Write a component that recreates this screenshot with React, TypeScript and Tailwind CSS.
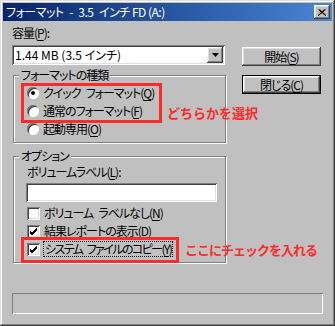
import React from 'react';

const raised =
  'shadow-[inset_-1px_-1px_#404040,inset_1px_1px_#ffffff,inset_-2px_-2px_#808080,inset_2px_2px_#dfdfdf]';
const sunken =
  'shadow-[inset_1px_1px_#808080,inset_-1px_-1px_#ffffff,inset_2px_2px_#404040,inset_-2px_-2px_#dfdfdf]';

// label with an underlined access key, e.g. 容量(P):
const Mn = ({ pre, k, post = '' }: { pre: string; k: string; post?: string }) => (
  <span>
    {pre}(<span className="underline underline-offset-2">{k}</span>){post}
  </span>
);

const Radio = ({ checked }: { checked?: boolean }) => (
  <span className="relative w-[12px] h-[12px] rounded-full bg-white shadow-[inset_1px_1px_#808080,inset_-1px_-1px_#ffffff,inset_2px_2px_#404040] flex items-center justify-center shrink-0">
    {checked && <span className="w-[4px] h-[4px] rounded-full bg-black" />}
  </span>
);

const Check = ({ checked }: { checked?: boolean }) => (
  <span className={`w-[13px] h-[13px] bg-white ${sunken} flex items-center justify-center shrink-0`}>
    {checked && (
      <svg width="9" height="9" viewBox="0 0 9 9">
        <path d="M1 4 L3 6 L8 1 M1 5 L3 7 L8 2 M1 6 L3 8 L8 3" stroke="#000" strokeWidth="1" fill="none" />
      </svg>
    )}
  </span>
);

const Group = ({ title, className, children }: { title: string; className: string; children: React.ReactNode }) => (
  <div className={`relative border border-[#808080] shadow-[1px_1px_0_#ffffff,inset_1px_1px_0_#ffffff] ${className}`}>
    <span className="absolute left-[5px] -top-[8px] px-[2px] bg-[#c0c0c0] leading-[14px]">{title}</span>
    {children}
  </div>
);

export default function App() {
  return (
    <div className="relative w-[335px] h-[326px] bg-[#c0c0c0] p-[3px] text-[12px] tracking-[-1px] text-black font-['Noto_Sans_CJK_JP',sans-serif] [font-feature-settings:'palt'] shadow-[inset_-1px_-1px_#404040,inset_1px_1px_#dfdfdf,inset_-2px_-2px_#808080,inset_2px_2px_#ffffff] overflow-hidden">
      {/* title bar */}
      <div className="h-[18px] flex items-center justify-between bg-gradient-to-r from-[#0a246a] to-[#4a86d4] pl-[3px] pr-[2px]">
        <span className="text-white leading-[18px] tracking-[-0.5px]">フォーマット{'\u2002'}-{'\u2002'}3.5{'\u2002'}インチ FD (A:)</span>
        <span className={`w-[16px] h-[14px] bg-[#c0c0c0] ${raised} flex items-center justify-center`}>
          <svg width="8" height="7" viewBox="0 0 8 7">
            <path d="M0.5 0.5 L7.5 6.5 M7.5 0.5 L0.5 6.5 M1.5 0.5 L8 6.5 M6.5 0.5 L0 6.5" stroke="#000" strokeWidth="1" />
          </svg>
        </span>
      </div>

      <div className="flex pl-[9px] pt-[5px]">
        {/* left column */}
        <div className="w-[214px] flex flex-col">
          <div className="h-[14px] leading-[14px]">
            <Mn pre="容量" k="P" post=":" />
          </div>
          <div className={`mt-[5px] w-[213px] h-[20px] bg-white ${sunken} flex items-center pl-[3px] pr-[2px]`}>
            <span className="flex-1 leading-[14px] tracking-normal">1.44 MB (3.5 インチ)</span>
            <span className={`w-[16px] h-[16px] bg-[#c0c0c0] ${raised} flex items-center justify-center`}>
              <svg width="7" height="4" viewBox="0 0 7 4">
                <path d="M0 0 H7 L3.5 4 Z" fill="#000" />
              </svg>
            </span>
          </div>

          <Group title="フォーマットの種類" className="mt-[10px] ml-[1px] w-[213px] h-[68px] pt-[8px] pl-[13px]">
            <div className="h-[18px] flex items-center gap-[4px]">
              <Radio checked />
              <span className="leading-[14px]">
                <Mn pre={'クイック\u2002フォーマット'} k="Q" />
              </span>
            </div>
            <div className="h-[18px] flex items-center gap-[4px]">
              <Radio />
              <span className="leading-[14px]">
                <Mn pre="通常のフォーマット" k="F" />
              </span>
            </div>
            <div className="h-[18px] flex items-center gap-[4px]">
              <Radio />
              <span className="leading-[14px]">
                <Mn pre="起動専用" k="O" />
              </span>
            </div>
          </Group>

          <Group title="オプション" className="mt-[13px] ml-[1px] w-[213px] h-[107px] pt-[8px] pl-[13px]">
            <div className="h-[14px] leading-[14px]">
              <Mn pre="ボリュームラベル" k="L" post=":" />
            </div>
            <div className={`mt-[4px] -ml-[1px] w-[191px] h-[19px] bg-white ${sunken}`} />
            <div className="mt-[2px] h-[18px] flex items-center gap-[4px]">
              <Check />
              <span className="leading-[14px]">
                <Mn pre={'ボリューム\u2002ラベルなし'} k="N" />
              </span>
            </div>
            <div className="h-[18px] flex items-center gap-[4px]">
              <Check checked />
              <span className="leading-[14px]">
                <Mn pre="結果レポートの表示" k="D" />
              </span>
            </div>
            <div className="h-[18px] flex items-center gap-[4px]">
              <Check checked />
              <span className="leading-[14px] tracking-[-1.6px] px-[1px] outline outline-1 outline-dotted outline-black">
                <Mn pre={'システム\u2002ファイルのコピー'} k="Y" />
              </span>
            </div>
          </Group>
        </div>

        {/* right column */}
        <div className="ml-[16px] pt-[21px] flex flex-col gap-[9px]">
          <button className={`w-[79px] h-[19px] bg-[#c0c0c0] ${raised} flex items-center justify-center leading-[14px]`}>
            <Mn pre="開始" k="S" />
          </button>
          <button className="w-[79px] h-[19px] border border-black flex">
            <span className={`flex-1 bg-[#c0c0c0] ${raised} flex items-center justify-center leading-[14px]`}>
              <Mn pre="閉じる" k="C" />
            </span>
          </button>
        </div>
      </div>

      {/* progress / status area */}
      <div className="mt-[30px] ml-[9px] w-[311px] h-[21px] shadow-[inset_1px_1px_#808080,inset_-1px_-1px_#ffffff]" />

      {/* red annotations */}
      <div className="absolute left-[21px] top-[83px] w-[141px] h-[40px] border-[3px] border-[#ff2a2a]" />
      <span className="absolute left-[167px] top-[104px] text-[13px] font-bold leading-[18px] tracking-normal text-[#ff2a2a] [font-feature-settings:normal]">どちらかを選択</span>
      <div className="absolute left-[21px] top-[237px] w-[158px] h-[26px] border-[3px] border-[#ff2a2a]" />
      <span className="absolute left-[185px] top-[241px] text-[13px] font-bold leading-[18px] tracking-[-1px] text-[#ff2a2a] [font-feature-settings:normal]">ここにチェックを入れる</span>
    </div>
  );
}
